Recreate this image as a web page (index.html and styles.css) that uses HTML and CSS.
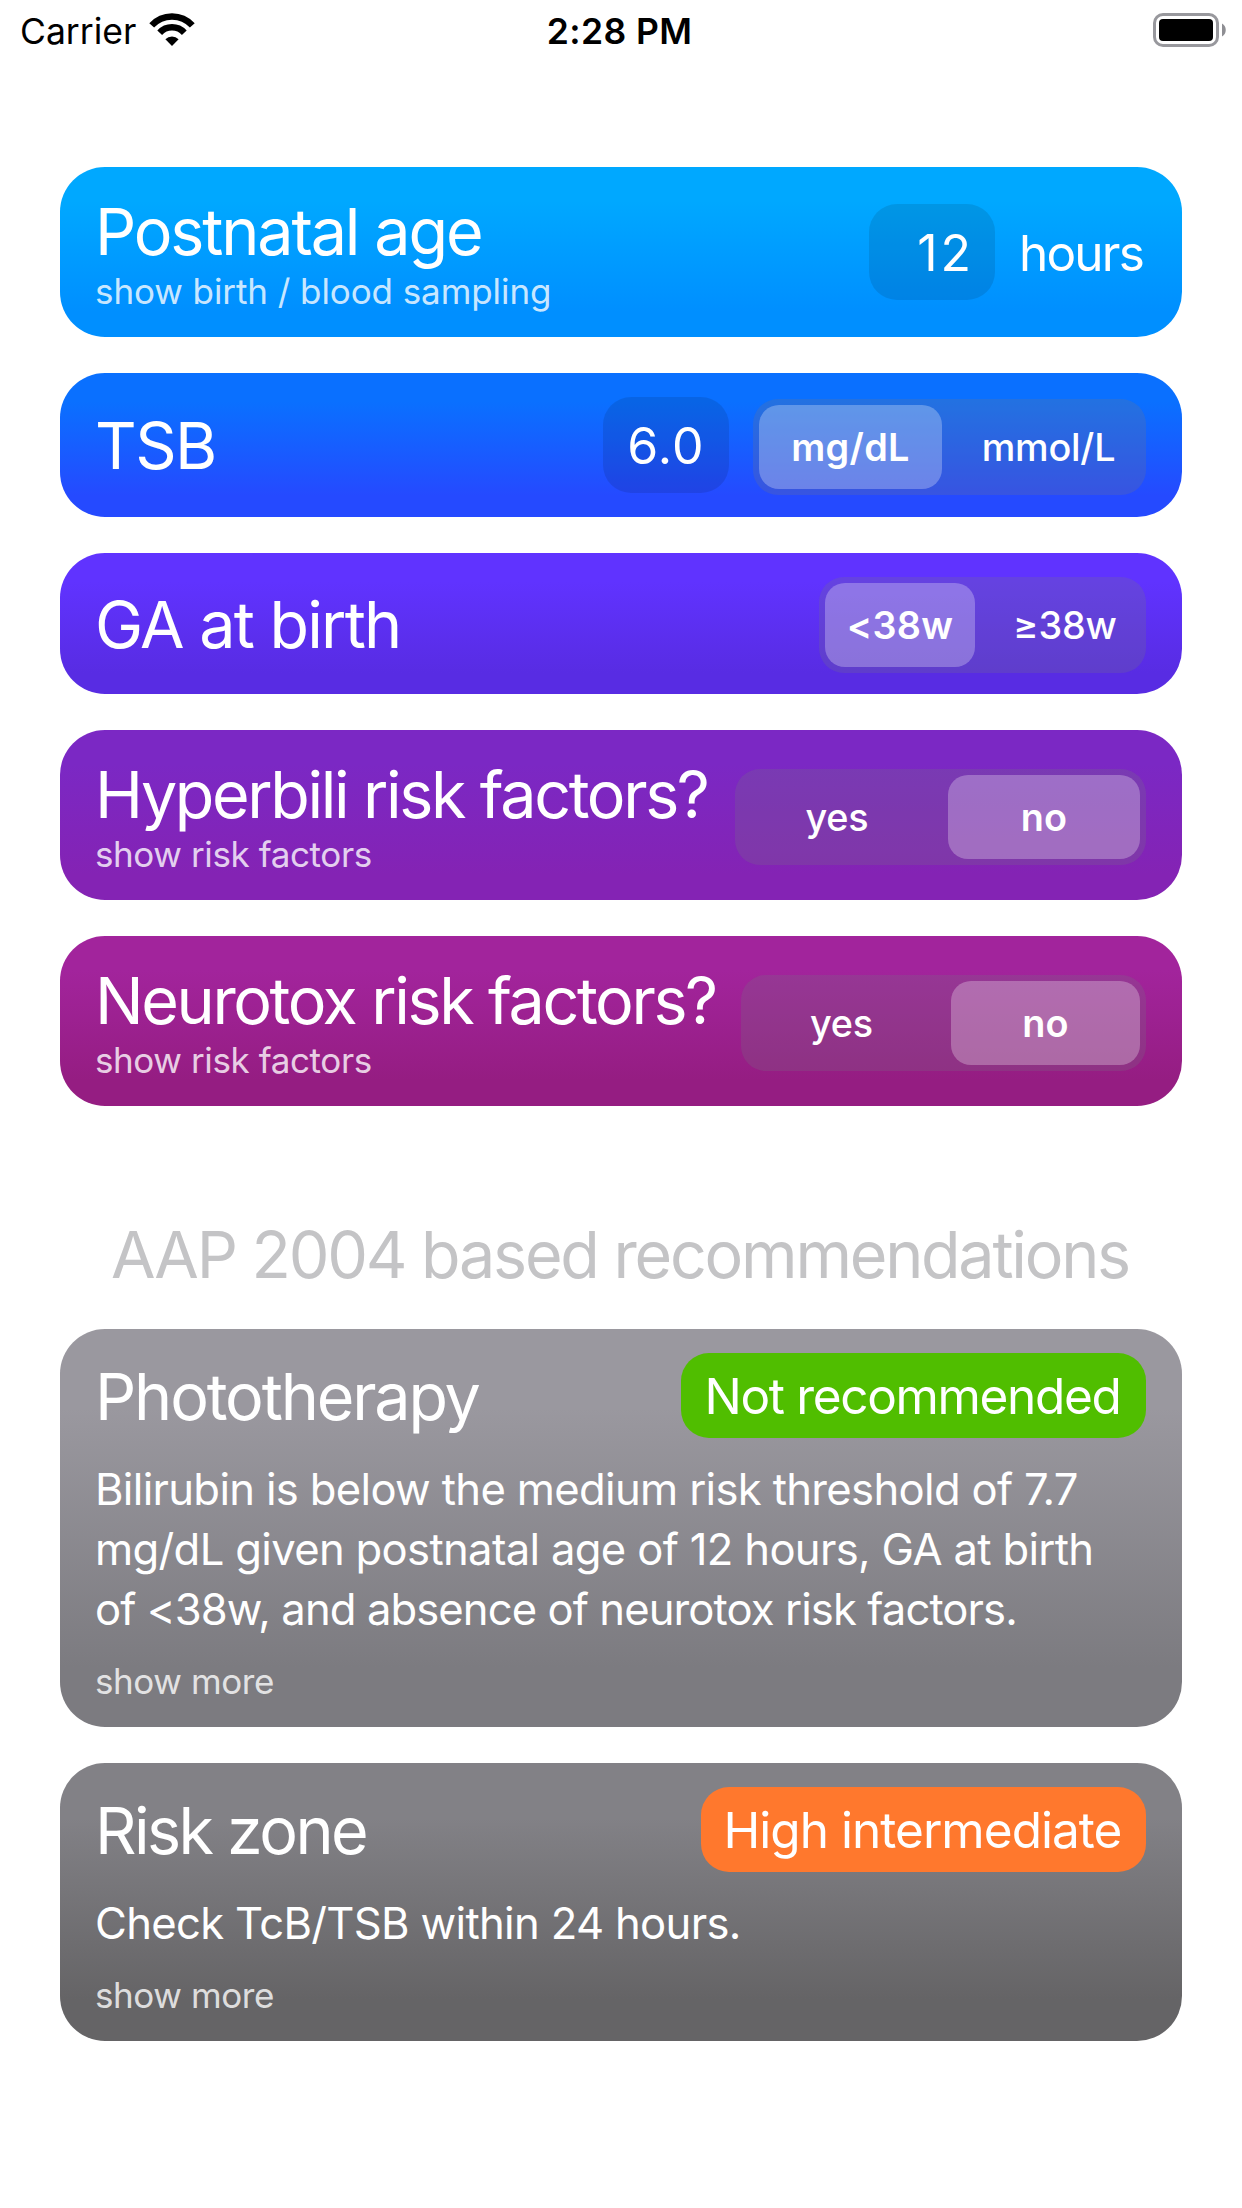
FILE: index.html
```
<!DOCTYPE html>
<html lang="en">
<head>
    <meta charset="UTF-8">
    <meta name="viewport" content="width=device-width, initial-scale=1.0">
    <title>Bilirubin</title>
    <link rel="stylesheet" href="styles.css">
</head>
<body>
    <header class="status-bar">
        <div class="status-left">
            <span>Carrier</span>
            <svg class="wifi" width="46" height="34" viewBox="0 0 46 34">
                <path d="M2.7 12.4 A27.5 27.5 0 0 1 43.3 12.4" fill="none" stroke="#000" stroke-width="6.5"/>
                <path d="M10.7 19.7 A16.7 16.7 0 0 1 35.3 19.7" fill="none" stroke="#000" stroke-width="6.5"/>
                <path d="M23 33 L16.4 26.3 A9.2 9.2 0 0 1 29.6 26.3 Z" fill="#000"/>
            </svg>
        </div>
        <span class="time">2:28 PM</span>
        <svg class="battery" width="74" height="34" viewBox="0 0 74 34">
            <rect x="1.5" y="1.5" width="63" height="31" rx="8.5" fill="none" stroke="#98989d" stroke-width="3"/>
            <rect x="6" y="6" width="54" height="22" rx="4" fill="#000"/>
            <path d="M69 10.5 A7.5 7.5 0 0 1 69 23.5 Z" fill="#8e8e93"/>
        </svg>
    </header>

    <main class="container">
        <section class="card tall age">
            <div class="card-label">
                <h2>Postnatal age</h2>
                <a class="more wide">show birth / blood sampling</a>
            </div>
            <div class="value right">12</div>
            <span class="unit">hours</span>
        </section>

        <section class="card tsb">
            <h2>TSB</h2>
            <div class="value">6.0</div>
            <div class="segment">
                <span class="option selected">mg/dL</span>
                <span class="option">mmol/L</span>
            </div>
        </section>

        <section class="card ga">
            <h2>GA at birth</h2>
            <div class="segment">
                <span class="option selected">&lt;38w</span>
                <span class="option">≥38w</span>
            </div>
        </section>

        <section class="card tall hyperbili">
            <div class="card-label">
                <h2>Hyperbili risk factors?</h2>
                <a class="more">show risk factors</a>
            </div>
            <div class="segment">
                <span class="option">yes</span>
                <span class="option selected">no</span>
            </div>
        </section>

        <section class="card tall neurotox">
            <div class="card-label">
                <h2>Neurotox risk factors?</h2>
                <a class="more">show risk factors</a>
            </div>
            <div class="segment">
                <span class="option">yes</span>
                <span class="option selected">no</span>
            </div>
        </section>

        <h1>AAP 2004 based recommendations</h1>

        <section class="result phototherapy">
            <div class="result-header">
                <h2>Phototherapy</h2>
                <span class="badge green">Not recommended</span>
            </div>
            <p>Bilirubin is below the medium risk threshold of 7.7<br>mg/dL given postnatal age of 12 hours, GA at birth<br><span class="tight">of &lt;38w, and absence of neurotox risk factors.</span></p>
            <a class="more">show more</a>
        </section>

        <section class="result risk-zone">
            <div class="result-header">
                <h2>Risk zone</h2>
                <span class="badge orange">High intermediate</span>
            </div>
            <p>Check TcB/TSB within 24 hours.</p>
            <a class="more">show more</a>
        </section>
    </main>
</body>
</html>
```
FILE: styles.css
```
* {
    box-sizing: border-box;
}

body {
    margin: 0;
    background-color: #fff;
    font-family: Inter, "Liberation Sans", sans-serif;
    color: white;
}

/* Status bar */
.status-bar {
    display: grid;
    grid-template-columns: 1fr auto 1fr;
    align-items: center;
    height: 62px;
    padding: 0 15px 0 20px;
    font-size: 35.5px;
    color: #000;
}

.status-left {
    display: flex;
    align-items: center;
    gap: 13px;
}

.wifi {
    margin-bottom: 3px;
}

.time {
    margin-right: 8px;
    font-weight: 600;
    letter-spacing: 0.4px;
}

.battery {
    justify-self: end;
    margin-bottom: 2px;
}

/* Cards */
.container {
    display: flex;
    flex-direction: column;
    gap: 36px;
    padding: 105px 60px 0;
}

.card {
    display: flex;
    align-items: center;
    padding: 0 36px 0 34px;
    border-radius: 45px;
}

.card.tall {
    height: 170px;
}

.card > h2,
.card-label {
    margin-right: auto;
}

.card-label {
    margin-bottom: -1px;
}

h2 {
    margin: 0;
    padding: 2px 0 0 1px;
    font-size: 64.6px;
    font-weight: 400;
    line-height: 76px;
    letter-spacing: -2.15px;
    white-space: nowrap;
}

.more {
    display: block;
    padding-left: 1px;
    font-size: 35px;
    line-height: 43px;
    letter-spacing: -0.4px;
    color: rgba(255, 255, 255, 0.8);
}

.more.wide {
    letter-spacing: -0.08px;
}

.age {
    background: linear-gradient(#00a8ff 20%, #008fff 85%);
}

.tsb {
    height: 144px;
    background: linear-gradient(#0a70ff 20%, #254aff 85%);
}

.tsb h2 {
    letter-spacing: -1.57px;
}

.ga {
    height: 141px;
    background: linear-gradient(#6033ff 20%, #582ce3 85%);
}

.ga h2 {
    letter-spacing: -1.77px;
}

.hyperbili {
    background: linear-gradient(#7b28c4 20%, #8423b4 85%);
}

.hyperbili h2,
.neurotox h2 {
    letter-spacing: -2.38px;
}

.neurotox {
    background: linear-gradient(#a2249c 20%, #951d82 85%);
}

/* Number fields */
.value {
    width: 126px;
    height: 96px;
    padding-top: 1px;
    border-radius: 28px;
    background-color: rgba(0, 0, 0, 0.1);
    font-size: 50px;
    line-height: 96px;
    letter-spacing: 1.2px;
    text-align: center;
}

.value.right {
    padding-right: 21px;
    letter-spacing: 3px;
    text-align: right;
}

.unit {
    width: 127px;
    margin-left: 24px;
    padding-top: 2px;
    font-size: 49.5px;
    letter-spacing: -1.8px;
}

/* Segmented controls */
.segment {
    display: flex;
    gap: 15px;
    height: 96px;
    margin-top: 4px;
    padding: 6px;
    border-radius: 25px;
    background-color: rgba(118, 118, 128, 0.24);
}

.option {
    flex: 1;
    border-radius: 20px;
    font-size: 37.8px;
    font-weight: 450;
    line-height: 84px;
    letter-spacing: -0.2px;
    text-align: center;
}

.option.selected {
    background-color: rgba(255, 255, 255, 0.27);
    font-weight: 570;
    letter-spacing: 0.3px;
}

.tsb .segment {
    width: 393px;
    margin-left: 24px;
}

.ga .segment {
    width: 327px;
    margin-top: 3px;
}

.hyperbili .segment {
    width: 411px;
}

.neurotox .segment {
    width: 405px;
}

/* Recommendations */
h1 {
    margin: 72px 0 0;
    padding: 2px 2px 0 0;
    font-size: 64.6px;
    font-weight: 400;
    line-height: 77px;
    letter-spacing: -2.25px;
    text-align: center;
    white-space: nowrap;
    color: #c4c4c6;
}

.result {
    padding: 24px 36px 24px 34px;
    border-radius: 45px;
}

.result-header {
    display: flex;
    align-items: center;
    justify-content: space-between;
}

.result p {
    margin: 22px 0 20px;
    padding-left: 1px;
    font-size: 43.6px;
    line-height: 60px;
    letter-spacing: -0.67px;
    white-space: nowrap;
}

.tight {
    letter-spacing: -0.91px;
}

.phototherapy {
    background: linear-gradient(#9a989f 20%, #7c7b80 85%);
}

.risk-zone {
    background: linear-gradient(#828186 20%, #656466 85%);
}

.risk-zone h2 {
    letter-spacing: -2.57px;
}

.badge {
    height: 85px;
    padding-right: 2px;
    border-radius: 28px;
    font-size: 49.5px;
    line-height: 86px;
    text-align: center;
}

.green {
    width: 465px;
    background-color: #50be00;
    letter-spacing: -1.34px;
}

.orange {
    width: 445px;
    background-color: #ff782d;
    letter-spacing: -0.97px;
}
```
